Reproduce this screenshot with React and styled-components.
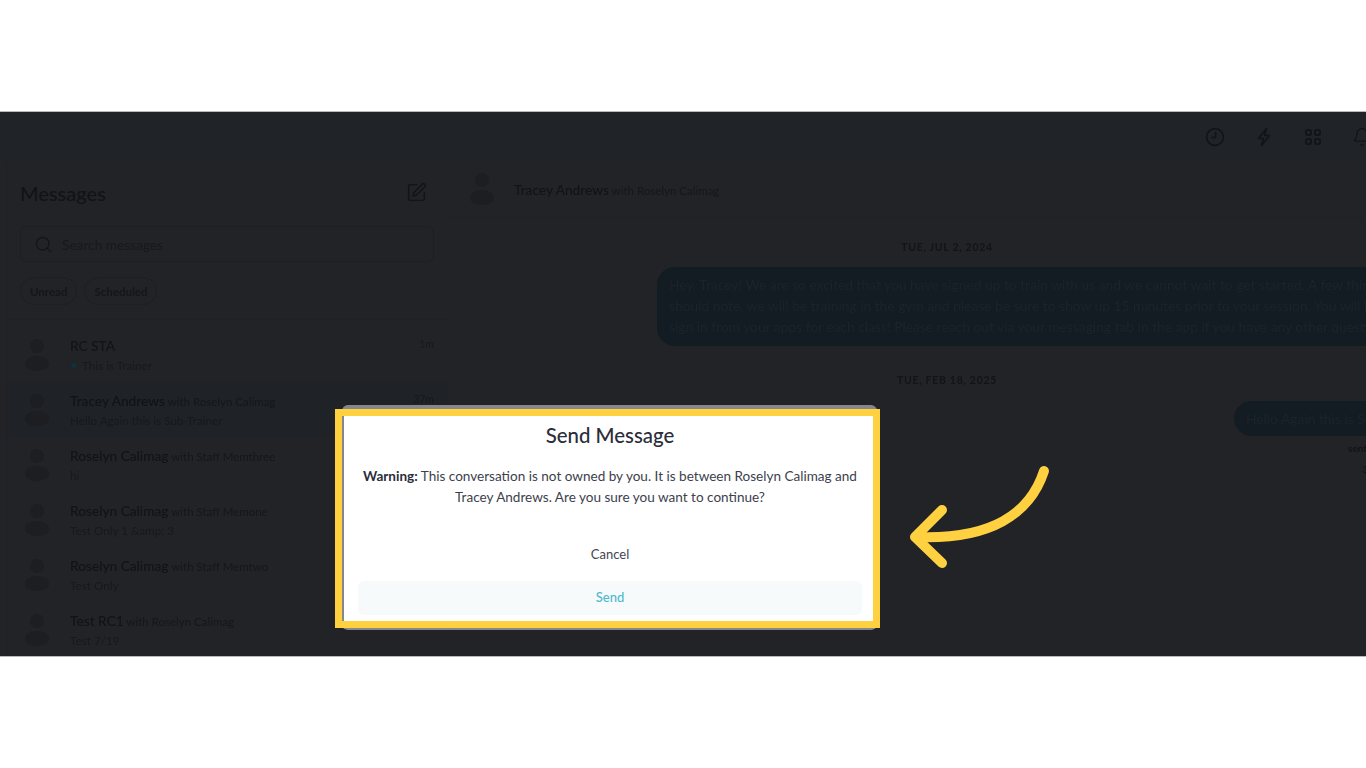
import React from 'react';
import styled, { createGlobalStyle } from 'styled-components';
import { Search, SquarePen, Bell } from 'lucide-react';

const conversations = [
  { name: 'RC STA', preview: 'This is Trainer', time: '1m', unread: true },
  { name: 'Tracey Andrews', other: 'Roselyn Calimag', preview: 'Hello Again this is Sub-Trainer', time: '37m', active: true },
  { name: 'Roselyn Calimag', other: 'Staff Memthree', preview: 'hi' },
  { name: 'Roselyn Calimag', other: 'Staff Memone', preview: 'Test Only 1 &amp; 3' },
  { name: 'Roselyn Calimag', other: 'Staff Memtwo', preview: 'Test Only' },
  { name: 'Test RC1', other: 'Roselyn Calimag', preview: 'Test 7/19' },
];

const GlobalStyle = createGlobalStyle`
  html, body {
    margin: 0;
    background: #fff;
    overflow: hidden;
  }
  * {
    box-sizing: border-box;
  }
`;

const Page = styled.div`
  width: 1366px;
  height: 768px;
  padding-top: 111px;
  background: #fff;
  font-family: Lato, "Liberation Sans", sans-serif;
`;

const Frame = styled.div`
  position: relative;
  width: 1366px;
  height: 546px;
  overflow: hidden;
  background: #222327;
  border-top: 1px solid #b9babb;
  border-bottom: 1px solid #b9babb;
`;

const Backdrop = styled.div`
  width: 1445px;
  height: 100%;
  color: #15171a;
  filter: blur(0.7px);
`;

const TopBar = styled.header`
  display: flex;
  justify-content: flex-end;
  align-items: center;
  gap: 29px;
  height: 49px;
  padding-right: 73px;
  background: #202327;
  color: #121417;
`;

const Columns = styled.div`
  display: flex;
  height: 495px;
`;

const Sidebar = styled.aside`
  flex: 0 0 443px;
  margin-left: 6px;
  border-left: 1px solid #1f2024;
  border-right: 1px solid #1f2226;
  background: #212327;
`;

const SideHead = styled.div`
  display: flex;
  justify-content: space-between;
  align-items: center;
  height: 65px;
  padding: 0 21px 2px 13px;
  color: #121417;
`;

const Title = styled.h1`
  margin: 0;
  font-size: 20px;
  font-weight: 500;
  color: #111316;
`;

const SearchBox = styled.div`
  display: flex;
  align-items: center;
  gap: 9px;
  width: 414px;
  height: 36px;
  margin-left: 13px;
  padding-left: 13px;
  border: 1px solid #1d1f22;
  border-radius: 6px;
  font-size: 13.7px;
  color: #17191c;
`;

const Chips = styled.div`
  display: flex;
  gap: 7px;
  height: 58px;
  padding: 15px 0 0 13px;
  border-bottom: 1px solid #1f2125;
`;

const Chip = styled.span`
  display: flex;
  align-items: center;
  height: 28px;
  padding: 0 9px;
  border: 1px solid #1d1f22;
  border-radius: 14px;
  font-size: 11.5px;
  font-weight: 700;
  color: #14161a;
`;

const RowList = styled.div`
  padding-top: 7px;
`;

const Row = styled.div`
  display: flex;
  align-items: center;
  gap: 3px;
  height: 55px;
  padding-right: 14px;
  background: ${(p) => (p.$active ? '#1f2226' : 'transparent')};
`;

const Avatar = styled.div`
  display: flex;
  flex: 0 0 ${(p) => p.$width}px;
  flex-direction: column;
  align-items: center;
  gap: 3px;
`;

const Head = styled.span`
  width: 14px;
  height: 14px;
  border-radius: 50%;
  background: #1c1e21;
`;

const Body = styled.span`
  width: 24px;
  height: 15px;
  border-radius: 50%;
  background: #1c1e21;
`;

const RowText = styled.div`
  flex: 1;
  min-width: 0;
`;

const NameLine = styled.div`
  display: flex;
  justify-content: space-between;
  height: 21px;
  line-height: 21px;
`;

const Name = styled.span`
  font-size: 13.7px;
  font-weight: 500;
  color: #111316;
`;

const With = styled.span`
  font-size: 11.5px;
  color: #15171a;
`;

const Time = styled.span`
  font-size: 10.5px;
  color: #17191c;
`;

const Preview = styled.div`
  display: flex;
  align-items: center;
  gap: 6px;
  height: 20px;
  font-size: 11.7px;
  color: #17191c;
`;

const Dot = styled.span`
  width: 5px;
  height: 5px;
  margin-left: 1px;
  border-radius: 50%;
  background: #10303b;
`;

const Conversation = styled.main`
  flex: 0 0 996px;
`;

const ConvoHead = styled.div`
  display: flex;
  align-items: center;
  height: 57px;
  padding: 0 0 1px 1px;
  border-bottom: 1px solid #1f2125;
`;

const DateLabel = styled.div`
  height: 20px;
  margin-top: ${(p) => p.$top}px;
  font-size: 10.5px;
  font-weight: 700;
  line-height: 20px;
  letter-spacing: 0.7px;
  text-align: center;
  color: #121417;
`;

const Thread = styled.div`
  display: flex;
  flex-direction: column;
  align-items: flex-end;
  padding-right: 14px;
`;

const Bubble = styled.div`
  width: ${(p) => p.$width}px;
  margin-top: ${(p) => p.$top}px;
  padding: 7px 12px ${(p) => p.$bottom}px;
  border-radius: 18px;
  background: #121c22;
  font-size: 13.8px;
  line-height: 21px;
  white-space: nowrap;
  color: #1b2429;
`;

const Receipt = styled.div`
  width: 83px;
  margin-top: 2px;
  font-size: 10px;
  font-weight: 700;
  line-height: 21px;
  color: #111316;
`;

const Dialog = styled.div`
  position: absolute;
  top: 293px;
  left: 342px;
  width: 535px;
  height: 225px;
  padding: 12px 15px 0 14px;
  border: solid #85878a;
  border-width: 4px 0 2px 2px;
  border-radius: 6px;
  background: #fff;
  text-align: center;
`;

const DialogTitle = styled.h2`
  margin: 0;
  font-size: 20.4px;
  font-weight: 500;
  line-height: 28px;
  color: #2a2d3a;
`;

const Warning = styled.p`
  margin: 17px 0 0;
  font-size: 13.56px;
  line-height: 21px;
  color: #3c3f4c;
  b {
    font-weight: 700;
    color: #2a2d3a;
  }
`;

const CancelButton = styled.div`
  height: 34px;
  margin-top: 29px;
  font-size: 13px;
  line-height: 34px;
  color: #44464f;
`;

const SendButton = styled.div`
  width: 504px;
  height: 34px;
  margin-top: 10px;
  border-radius: 6px;
  background: #f6fafb;
  font-size: 13px;
  font-weight: 500;
  line-height: 32px;
  color: #4fb9cf;
`;

const Highlight = styled.div`
  position: absolute;
  top: 297px;
  left: 335px;
  width: 545px;
  height: 219px;
  border: 7px solid #ffd040;
  pointer-events: none;
`;

const Arrow = styled.svg`
  position: absolute;
  top: 352px;
  left: 900px;
`;

function ClockIcon() {
  return (
    <svg width="20" height="20" viewBox="0 0 20 20" fill="none" stroke="currentColor" strokeWidth="1.6" strokeLinecap="round" strokeLinejoin="round">
      <circle cx="10" cy="10" r="8.4" />
      <path d="M10.5 5.5V10.5H7" />
    </svg>
  );
}

function BoltIcon() {
  return (
    <svg width="20" height="20" viewBox="0 0 20 20" fill="none" stroke="currentColor" strokeWidth="1.6" strokeLinejoin="round">
      <path d="M12.5 1.5L4.5 11.5H9.5L7.5 18.5L15.5 8.5H10.5Z" />
    </svg>
  );
}

function GridIcon() {
  return (
    <svg width="20" height="20" viewBox="0 0 20 20" fill="none" stroke="currentColor" strokeWidth="1.8">
      <rect x="2.9" y="2.9" width="5.2" height="5.2" rx="2" />
      <rect x="11.9" y="2.9" width="5.2" height="5.2" rx="2" />
      <rect x="2.9" y="11.9" width="5.2" height="5.2" rx="2" />
      <rect x="11.9" y="11.9" width="5.2" height="5.2" rx="2" />
    </svg>
  );
}

function Person({ width }) {
  return (
    <Avatar $width={width}>
      <Head />
      <Body />
    </Avatar>
  );
}

export default function App() {
  return (
    <Page>
      <GlobalStyle />
      <Frame>
        <Backdrop>
          <TopBar>
            <ClockIcon />
            <BoltIcon />
            <GridIcon />
            <Bell size={20} strokeWidth={1.6} />
          </TopBar>
          <Columns>
            <Sidebar>
              <SideHead>
                <Title>Messages</Title>
                <SquarePen size={21} strokeWidth={1.7} />
              </SideHead>
              <SearchBox>
                <Search size={19} strokeWidth={1.5} color="#121417" />
                Search messages
              </SearchBox>
              <Chips>
                <Chip>Unread</Chip>
                <Chip>Scheduled</Chip>
              </Chips>
              <RowList>
                {conversations.map((c, i) => (
                  <Row key={i} $active={c.active}>
                    <Person width={60} />
                    <RowText>
                      <NameLine>
                        <span>
                          <Name>{c.name}</Name>
                          {c.other && <With> with {c.other}</With>}
                        </span>
                        {c.time && <Time>{c.time}</Time>}
                      </NameLine>
                      <Preview>
                        {c.unread && <Dot />}
                        {c.preview}
                      </Preview>
                    </RowText>
                  </Row>
                ))}
              </RowList>
            </Sidebar>
            <Conversation>
              <ConvoHead>
                <Person width={64} />
                <span>
                  <Name>Tracey Andrews</Name>
                  <With> with Roselyn Calimag</With>
                </span>
              </ConvoHead>
              <DateLabel $top={19}>TUE, JUL 2, 2024</DateLabel>
              <Thread>
                <Bubble $width={774} $top={10} $bottom={9}>
                  Hey, Tracey! We are so excited that you have signed up to train with us and we cannot wait to get started. A few things you
                  <br />
                  should note, we will be training in the gym and please be sure to show up 15 minutes prior to your session. You will be able to
                  <br />
                  sign in from your apps for each class! Please reach out via your messaging tab in the app if you have any other questions.
                </Bubble>
              </Thread>
              <DateLabel $top={24}>TUE, FEB 18, 2025</DateLabel>
              <Thread>
                <Bubble $width={197} $top={11} $bottom={7}>Hello Again this is Sub-Trainer</Bubble>
                <Receipt>
                  sent
                  <br />
                  <span>&nbsp;&nbsp;&nbsp;&nbsp;&nbsp;&nbsp;3</span>
                </Receipt>
              </Thread>
            </Conversation>
          </Columns>
        </Backdrop>

        <Dialog>
          <DialogTitle>Send Message</DialogTitle>
          <Warning>
            <b>Warning:</b> This conversation is not owned by you. It is between Roselyn Calimag and
            <br />
            Tracey Andrews. Are you sure you want to continue?
          </Warning>
          <CancelButton>Cancel</CancelButton>
          <SendButton>Send</SendButton>
        </Dialog>
        <Highlight />
        <Arrow width="160" height="110" viewBox="0 0 160 110" fill="none" stroke="#ffd040" strokeWidth="10" strokeLinecap="round" strokeLinejoin="round">
          <path d="M144 7C130 50 90 76 16 73" />
          <path d="M42 46L15 73L42 99" />
        </Arrow>
      </Frame>
    </Page>
  );
}
